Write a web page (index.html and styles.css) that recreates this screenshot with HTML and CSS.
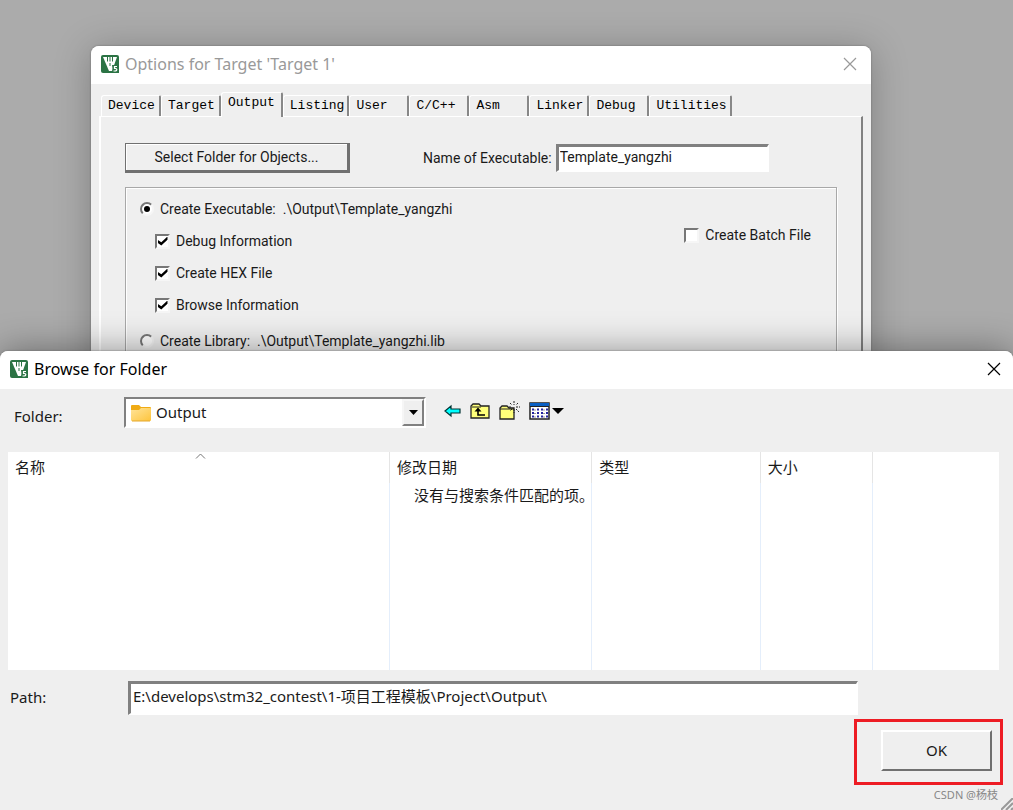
FILE: index.html
```html
<!DOCTYPE html>
<html lang="zh-CN">
<head>
    <meta charset="UTF-8">
    <meta name="viewport" content="width=device-width, initial-scale=1.0">
    <title>Browse for Folder</title>
    <link rel="stylesheet" href="styles.css">
</head>
<body>
    <!-- Logo shared by both windows -->
    <svg class="sprite" aria-hidden="true">
        <symbol id="logo" viewBox="0 0 18 18">
            <rect width="18" height="18" rx="2" fill="#2b7344"/>
            <path d="M2 2h14l-5 14H8z" fill="#fff"/>
            <path d="M6.500 2v4.500M9 2v4.500M11.500 2v4.500" stroke="#2b7344"/>
            <path d="M9 8v3" stroke="#2b7344"/>
            <path d="M11 10h7v8h-6z" fill="#2b7344"/>
            <path d="M16 11.500h-2.500v2c3-.5 3 2.500 .5 2.500h-1.500" fill="none" stroke="#fff" stroke-width="1.200"/>
        </symbol>
    </svg>

    <div class="desktop">
        <!-- Options window -->
        <section class="window options">
            <header class="title-bar">
                <svg class="logo"><use href="#logo"/></svg>
                <h1>Options for Target 'Target 1'</h1>
                <button class="close" aria-label="Close">
                    <svg width="14" height="14" viewBox="0 0 14 14"><path d="M1 1l12 12M13 1L1 13"/></svg>
                </button>
            </header>

            <nav class="tabs">
                <button>Device</button>
                <button>Target</button>
                <button class="active">Output</button>
                <button>Listing</button>
                <button>User</button>
                <button>C/C++</button>
                <button>Asm</button>
                <button>Linker</button>
                <button>Debug</button>
                <button>Utilities</button>
            </nav>

            <div class="panel">
                <div class="top-row">
                    <button class="select-folder">Select Folder for Objects...</button>
                    <label for="exe-name">Name of Executable:</label>
                    <input type="text" id="exe-name" class="field" value="Template_yangzhi">
                </div>

                <div class="group">
                    <div class="group-left">
                        <label><input type="radio" name="kind" checked> <span>Create Executable:&nbsp; .\Output\Template_yangzhi</span></label>
                        <label class="sub"><input type="checkbox" checked> <span>Debug Information</span></label>
                        <label class="sub"><input type="checkbox" checked> <span>Create HEX File</span></label>
                        <label class="sub"><input type="checkbox" checked> <span>Browse Information</span></label>
                        <label class="library"><input type="radio" name="kind"> <span>Create Library:&nbsp; .\Output\Template_yangzhi.lib</span></label>
                    </div>
                    <div class="group-right">
                        <label><input type="checkbox"> <span>Create Batch File</span></label>
                    </div>
                </div>
            </div>
        </section>

        <!-- Browse window -->
        <section class="window browse">
            <header class="title-bar">
                <svg class="logo"><use href="#logo"/></svg>
                <h2>Browse for Folder</h2>
                <button class="close" aria-label="Close">
                    <svg width="14" height="14" viewBox="0 0 14 14"><path d="M1 1l12 12M13 1L1 13"/></svg>
                </button>
            </header>

            <div class="folder-row">
                <label for="folder">Folder:</label>
                <div class="combo">
                    <svg width="21" height="18" viewBox="0 0 21 18">
                        <defs>
                            <linearGradient id="fold" x1="0" y1="0" x2="1" y2="1">
                                <stop offset="0" stop-color="#ffe49a"/>
                                <stop offset="1" stop-color="#fdc43c"/>
                            </linearGradient>
                        </defs>
                        <path d="M0 2q0-1 1-1h7l2 2h9q1 0 1 1v3H0z" fill="#f0ab14"/>
                        <path d="M0 6h8l2-2h9q1 0 1 1v11q0 1-1 1H1q-1 0-1-1z" fill="url(#fold)"/>
                        <path d="M1 17h18" stroke="#e5a72a"/>
                    </svg>
                    <select id="folder"><option>Output</option></select>
                    <span class="arrow"><svg width="9" height="5" viewBox="0 0 9 5"><path d="M0 0h9L4.500 5z"/></svg></span>
                </div>
                <div class="tools">
                    <button aria-label="Back">
                        <svg width="17" height="14" viewBox="0 0 17 14"><path d="M1 7l6-5v3h9v4H7v3z" fill="#0ff" stroke="#033" stroke-width="1.200"/></svg>
                    </button>
                    <button aria-label="Up">
                        <svg width="20" height="18" viewBox="0 0 20 18">
                            <path d="M1 16V4l2-2h6l2 2h8v12z" fill="#ffff7a" stroke="#222" stroke-width="1.300"/>
                            <path d="M2 5h9" stroke="#222"/>
                            <path d="M15 13H8V8" fill="none" stroke="#000" stroke-width="1.600"/>
                            <path d="M4.500 9.500L8 5.500l3.500 4z"/>
                        </svg>
                    </button>
                    <button aria-label="New folder">
                        <svg width="21" height="19" viewBox="0 0 21 19">
                            <path d="M1 18V7l2-2h5l2 2h5v11z" fill="#ffff7a" stroke="#222" stroke-width="1.300"/>
                            <path d="M1 8h14" stroke="#222"/>
                            <path d="M15 0v4M15 8v4M10 6h3M17 6h4M11 2l2 2M19 2l-2 2M17 8l3 3M13 8l-2 2" stroke="#222" stroke-dasharray="2 1"/>
                        </svg>
                    </button>
                    <button class="view" aria-label="View">
                        <svg width="21" height="18" viewBox="0 0 21 18">
                            <path d="M1 1h19v16H1z" fill="#fff" stroke="#222" stroke-width="1.500"/>
                            <path d="M1 2.500h19" stroke="#0a5fc4" stroke-width="3"/>
                            <path d="M1 4.500h19" stroke="#222"/>
                            <path d="M3 7.500h2M8 7.500h2M12 7.500h2M17 7.500h2M3 11h2M8 11h2M12 11h2M17 11h2M3 14.500h2M8 14.500h2M12 14.500h2M17 14.500h2" stroke="#2424a0" stroke-width="2"/>
                            <path d="M5 8h2M14 8h2M5 11.500h2M14 11.500h2M5 15h2M14 15h2" stroke="#999"/>
                        </svg>
                        <svg width="12" height="6" viewBox="0 0 12 6"><path d="M0 0h12L6 6z"/></svg>
                    </button>
                </div>
            </div>

            <table class="files">
                <colgroup>
                    <col class="col-name">
                    <col class="col-date">
                    <col class="col-type">
                    <col class="col-size">
                    <col>
                </colgroup>
                <thead>
                    <tr>
                        <th>
                            名称
                            <svg class="sort" width="11" height="6" viewBox="0 0 11 6"><path d="M1 5.500L5.500 1 10 5.500"/></svg>
                        </th>
                        <th>修改日期</th>
                        <th>类型</th>
                        <th>大小</th>
                        <th></th>
                    </tr>
                </thead>
                <tbody>
                    <tr>
                        <td></td>
                        <td class="empty">没有与搜索条件匹配的项。</td>
                        <td></td>
                        <td></td>
                        <td></td>
                    </tr>
                </tbody>
            </table>

            <div class="path-row">
                <label for="path">Path:</label>
                <input type="text" id="path" class="field" value="E:\develops\stm32_contest\1-项目工程模板\Project\Output\">
            </div>

            <div class="actions">
                <div class="highlight"><button class="ok">OK</button></div>
            </div>

            <footer>CSDN @杨枝</footer>
            <svg class="grip" width="12" height="12" viewBox="0 0 12 12"><path d="M0 12L12 0M5 12l7-7M10 12l2-2"/></svg>
        </section>
    </div>
</body>
</html>
```
FILE: styles.css
```css
* {
    box-sizing: border-box;
}

body {
    margin: 0;
    font-family: "Noto Sans", "Noto Sans CJK SC", sans-serif;
    font-size: 15px;
    color: #1a1a1a;
}

button, input, select {
    font: inherit;
    color: inherit;
}

h1, h2 {
    margin: 0;
    flex: 1;
    font-size: 16px;
    font-weight: normal;
}

.sprite {
    display: none;
}

.desktop {
    position: relative;
    min-height: 100vh;
    background-color: #ababab;
    overflow: hidden;
}

/* Windows */
.window {
    position: absolute;
    background-color: #efefef;
    border-radius: 8px 8px 0 0;
    overflow: hidden;
}

.options {
    top: 46px;
    left: 91px;
    right: 142px;
    bottom: 0;
    font-family: Roboto, sans-serif;
    font-size: 14px;
    box-shadow: 0 0 2px #666, 0 4px 36px rgba(0, 0, 0, 0.25);
}

.browse {
    top: 351px;
    left: 0;
    right: 0;
    bottom: 0;
    display: flex;
    flex-direction: column;
    box-shadow: 0 0 2px #666, 0 0 36px rgba(0, 0, 0, 0.4);
}

.title-bar {
    display: flex;
    align-items: center;
    gap: 6px;
    height: 38px;
    padding: 0 12px 2px 10px;
    background-color: #fff;
    color: #000;
    font-family: "Noto Sans", sans-serif;
    flex-shrink: 0;
}

.options .title-bar {
    padding-right: 14px;
    color: #999;
}

.logo {
    width: 18px;
    height: 18px;
}

.close {
    display: flex;
    padding: 0;
    border: none;
    background: none;
}

.close path {
    stroke: currentColor;
    stroke-width: 1.2;
}

/* Tabs */
.tabs {
    display: flex;
    align-items: flex-end;
    height: 32px;
    padding-left: 10px;
}

.tabs button {
    min-width: 60px;
    height: 21px;
    padding: 0 3px 0 6px;
    text-align: left;
    font-family: "Liberation Mono", monospace;
    font-size: 13px;
    line-height: 20px;
    color: #000;
    background-color: #efefef;
    border: none;
    border-top: 1px solid #fff;
    border-left: 1px solid #fff;
    border-right: 2px solid #888;
    border-radius: 3px 2px 0 0;
    white-space: nowrap;
}

.tabs .active {
    height: 25px;
    margin-bottom: -1px;
    padding: 0 6px 4px;
    line-height: 20px;
}

.panel {
    height: 100%;
    margin: 0 8px;
    padding: 26px 24px 0;
    border-top: 1px solid #fff;
    border-left: 2px solid #fff;
    border-right: 2px solid #808080;
}

.top-row {
    display: flex;
    align-items: center;
}

.select-folder {
    width: 225px;
    height: 30px;
    padding: 0;
    background-color: #efefef;
    border: 2px solid #707070;
    border-width: 1px 3px 3px 1px;
    box-shadow: inset 1px 1px #fff;
}

.top-row label {
    margin: 0 4px 0 73px;
}

.field {
    padding: 0 2px 4px;
    border: 2px solid #fff;
    border-top: 3px solid #808080;
    border-left: 3px solid #808080;
    border-radius: 0;
    background-color: #fff;
    outline: none;
}

.top-row .field {
    width: 213px;
    height: 28px;
    padding-left: 1px;
}

.group {
    display: flex;
    justify-content: space-between;
    margin-top: 14px;
    padding: 5px 25px 0 14px;
    height: 240px;
    border: 1px solid #a8a8a8;
    box-shadow: inset 1px 1px #fff, 1px 1px #fff;
}

.group label {
    display: flex;
    align-items: center;
    gap: 6px;
    height: 32px;
}

.group .sub {
    padding-left: 15px;
}

.group .library {
    margin-top: 4px;
}

.group-right {
    padding-top: 26px;
}

input[type="radio"], input[type="checkbox"] {
    appearance: none;
    display: grid;
    place-items: center;
    width: 15px;
    height: 15px;
    margin: 0;
    background-color: #fff;
    border: 2px solid #777;
    border-right-color: #f6f6f6;
    border-bottom-color: #f6f6f6;
}

input[type="radio"] {
    width: 14px;
    height: 14px;
    border-radius: 50%;
}

input[type="radio"]:checked::before {
    content: "";
    width: 6px;
    height: 6px;
    border-radius: 50%;
    background-color: #000;
}

input[type="checkbox"]:checked::before {
    content: "";
    width: 10px;
    height: 9px;
    background-color: #000;
    clip-path: polygon(0 35%, 38% 65%, 100% 0, 100% 35%, 38% 100%, 0 70%);
}

/* Folder row */
.folder-row {
    display: flex;
    align-items: center;
    height: 63px;
    padding: 0 14px 16px;
    flex-shrink: 0;
}

.folder-row label {
    width: 110px;
    padding-top: 6px;
}

.combo {
    display: flex;
    align-items: center;
    width: 302px;
    height: 31px;
    padding-left: 5px;
    background-color: #fff;
    border: 2px solid #fff;
    border-top-color: #808080;
    border-left-color: #808080;
}

.combo select {
    flex: 1;
    appearance: none;
    border: none;
    padding: 0 4px 2px;
    background: none;
    outline: none;
}

.arrow {
    display: flex;
    align-items: center;
    justify-content: center;
    align-self: stretch;
    width: 22px;
    background-color: #efefef;
    border: 2px solid #808080;
    border-top-color: #f6f6f6;
    border-left-color: #f6f6f6;
}

.tools {
    display: flex;
    align-items: center;
    gap: 9px;
    margin-left: 18px;
    padding-bottom: 4px;
}

.tools button {
    display: flex;
    align-items: center;
    gap: 2px;
    padding: 0;
    border: none;
    background: none;
}

/* File list */
.files {
    flex: 1;
    display: table;
    margin: 0 14px 0 8px;
    width: calc(100% - 22px);
    height: 218px;
    table-layout: fixed;
    border-collapse: collapse;
    background-color: #fff;
}

.col-name {
    width: 38.5%;
}

.col-date {
    width: 20.4%;
}

.col-type {
    width: 17%;
}

.col-size {
    width: 11.3%;
}

th {
    position: relative;
    height: 31px;
    padding: 0 7px 2px;
    text-align: left;
    font-weight: normal;
    border-right: 1px solid #e5e5e5;
}

td {
    vertical-align: top;
    padding: 1px 0 0;
    border-right: 1px solid #e4eefb;
}

th:last-child, td:last-child {
    border-right: none;
}

.sort {
    position: absolute;
    top: 1px;
    left: 49%;
    fill: none;
    stroke: #777;
}

.empty {
    padding-left: 24px;
    white-space: nowrap;
}

/* Path and buttons */
.path-row {
    display: flex;
    align-items: center;
    margin-top: 11px;
    padding-left: 10px;
    flex-shrink: 0;
}

.path-row label {
    width: 118px;
    padding-bottom: 2px;
}

.path-row .field {
    width: 730px;
    height: 34px;
    padding-bottom: 7px;
}

.actions {
    display: flex;
    justify-content: flex-end;
    margin-top: 4px;
    padding-right: 10px;
}

.highlight {
    padding: 8px 8px 11px 24px;
    border: 3px solid #ed1c24;
}

.ok {
    display: block;
    width: 111px;
    height: 41px;
    padding: 0 0 2px;
    background-color: #efefef;
    border: 2px solid #707070;
    border-top-color: #fff;
    border-left-color: #fff;
}

footer {
    padding: 2px 15px 7px;
    text-align: right;
    font-size: 11px;
    line-height: 16px;
    color: #888;
}

.grip {
    position: absolute;
    right: 0;
    bottom: 0;
    stroke: #999;
    stroke-width: 2;
}
```
